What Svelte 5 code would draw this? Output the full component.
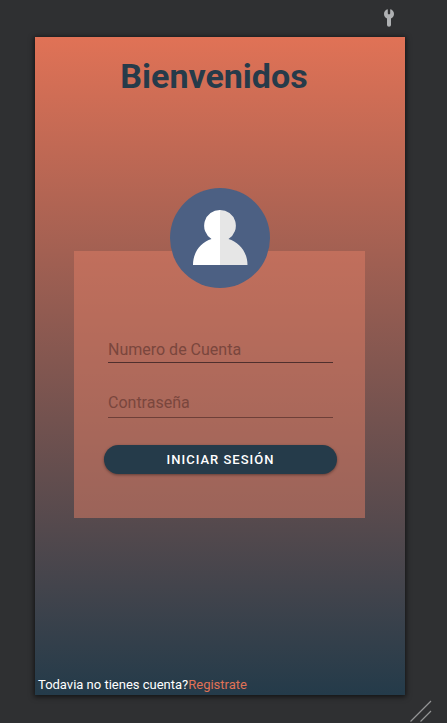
<script lang="ts">
  let account = $state('');
  let password = $state('');
</script>

<div class="workspace">
  <header class="toolbar">
    <button class="tool" type="button" aria-label="Ajustes">
      <svg width="12" height="18" viewBox="0 0 12 18" aria-hidden="true">
        <path d="M4.800 0.300C2.400 0.800 1 2.700 1 5C1 7.200 2.200 8.800 4 9.600V16Q4 17.800 6 17.800T8 16V9.600C9.800 8.800 11 7.200 11 5C11 2.700 9.600 0.800 7.200 0.300V4.600Q7.200 5.400 6 5.400T4.800 4.600Z" fill="#afb1b3" />
      </svg>
    </button>
  </header>

  <main class="screen">
    <h1>Bienvenidos</h1>

    <section class="login">
      <svg class="avatar" viewBox="0 0 100 100" aria-hidden="true">
        <circle cx="50" cy="50" r="50" fill="#4c6083" />
        <path d="M50 22a15.700 15.700 0 0 0-8.500 29C31 54 23 64 23 77H50Z" fill="#fff" />
        <path d="M50 22a15.700 15.700 0 0 1 8.500 29C69 54 77.500 64 77.500 77H50Z" fill="#e6e6e6" />
      </svg>
      <form class="card" onsubmit={(e) => e.preventDefault()}>
        <input class="strong" type="text" placeholder="Numero de Cuenta" aria-label="Numero de Cuenta" bind:value={account} />
        <input type="password" placeholder="Contraseña" aria-label="Contraseña" bind:value={password} />
        <button class="submit" type="submit">INICIAR SESIÓN</button>
      </form>
    </section>

    <p class="signup"><span>Todavia no tienes cuenta?</span><a href="#registro">Registrate</a></p>
  </main>

  <svg class="grip" width="22" height="22" viewBox="0 0 22 22" aria-hidden="true">
    <path d="M0.500 21.500L21 1M10.500 21.500L21 11" stroke="#949596" stroke-width="1.200" fill="none" />
  </svg>
</div>

<style>
  :global(body) {
    margin: 0;
    background: #2f3032;
  }

  .workspace {
    box-sizing: border-box;
    display: flex;
    flex-direction: column;
    min-height: 100vh;
    padding: 0 42px 28px 35px;
    font-family: Roboto, "Liberation Sans", sans-serif;
    position: relative;
  }

  .toolbar {
    display: flex;
    justify-content: flex-end;
    height: 28px;
    padding: 9px 10px 0 0;
  }

  .tool {
    width: 12px;
    height: 18px;
    padding: 0;
    border: 0;
    background: none;
  }

  .tool svg {
    display: block;
  }

  .screen {
    flex: 1;
    display: flex;
    flex-direction: column;
    background: linear-gradient(#e07256, #243b4a);
    box-shadow: 0 1px 5px 1px rgba(0, 0, 0, 0.6);
  }

  h1 {
    margin: 19px 0 0;
    padding-right: 12px;
    color: #263b4a;
    font-size: 34px;
    line-height: 40px;
    font-weight: 700;
    text-align: center;
  }

  .login {
    display: flex;
    flex-direction: column;
    align-items: center;
    margin: 92px 40px 40px 39px;
  }

  .avatar {
    width: 100px;
    height: 100px;
    margin-bottom: -37px;
    z-index: 1;
  }

  .card {
    box-sizing: border-box;
    display: flex;
    flex-direction: column;
    width: 100%;
    padding: 84px 28px 44px 30px;
    background: rgba(224, 126, 102, 0.5);
  }

  input {
    box-sizing: border-box;
    height: 28px;
    margin: 0 4px 27px;
    padding: 0 0 2px;
    border: 0;
    border-bottom: 1px solid #6e3f38;
    border-radius: 0;
    outline: 0;
    background: none;
    color: #263b4a;
    font-family: inherit;
    font-size: 16px;
  }

  input.strong {
    padding: 2px 0 0;
    border-bottom-color: #4f2f2d;
  }

  input::placeholder {
    color: #7a463d;
    opacity: 1;
  }

  .submit {
    height: 29px;
    padding: 0;
    border: 0;
    border-radius: 15px;
    background: #253b4a;
    box-shadow: 0 1px 3px rgba(0, 0, 0, 0.4);
    color: #fff;
    font-family: inherit;
    font-size: 13px;
    font-weight: 500;
    letter-spacing: 1px;
  }

  .signup {
    margin: auto 0 2px 3px;
    color: #fff;
    font-size: 13px;
    line-height: 16px;
  }

  .signup a {
    color: #e07256;
    text-decoration: none;
  }

  .grip {
    position: absolute;
    right: 15px;
    bottom: 1px;
  }
</style>
